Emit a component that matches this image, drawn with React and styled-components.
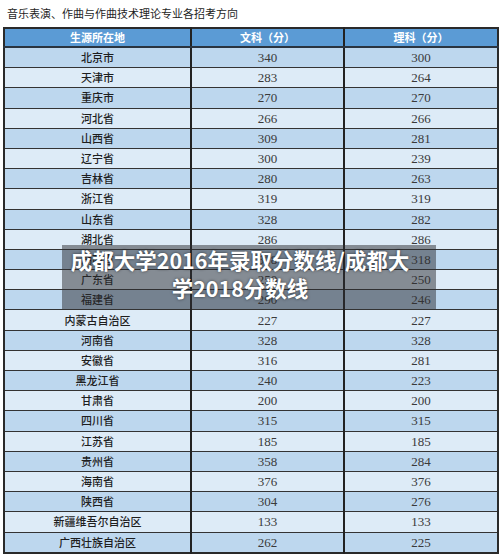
import * as React from 'react';
import styled, { createGlobalStyle } from 'styled-components';

const rows = [
    ['北京市', 340, 300],
    ['天津市', 283, 264],
    ['重庆市', 270, 270],
    ['河北省', 266, 266],
    ['山西省', 309, 281],
    ['辽宁省', 300, 239],
    ['吉林省', 280, 263],
    ['浙江省', 319, 319],
    ['山东省', 328, 282],
    ['湖北省', 286, 286],
    ['湖南省', 318, 318],
    ['广东省', 250, 250],
    ['福建省', 290, 246],
    ['内蒙古自治区', 227, 227],
    ['河南省', 328, 328],
    ['安徽省', 316, 281],
    ['黑龙江省', 240, 223],
    ['甘肃省', 200, 200],
    ['四川省', 315, 315],
    ['江苏省', 185, 185],
    ['贵州省', 358, 284],
    ['海南省', 376, 376],
    ['陕西省', 304, 276],
    ['新疆维吾尔自治区', 133, 133],
    ['广西壮族自治区', 262, 225],
];

const GlobalStyle = createGlobalStyle`
    html, body {
        margin: 0;
        padding: 0;
        background: #fff;
    }
    body {
        font-family: "Noto Sans CJK SC", "Noto Sans", sans-serif;
    }
`;

const Page = styled.div`
    position: relative;
    width: 500px;
    height: 555px;
    overflow: hidden;
    padding: 5px 0 0 3px;
    box-sizing: border-box;
`;

const Title = styled.div`
    padding-left: 4px;
    font-size: 11px;
    line-height: 16px;
    color: #1e1e1e;
    margin-bottom: 6px;
`;

const Table = styled.table`
    width: 494px;
    border-collapse: collapse;
    table-layout: fixed;
    border: 2px solid #2a2a2a;
`;

const HeadCell = styled.th`
    height: 17px;
    padding: 0;
    background: #5b9bd5;
    color: #fff;
    font-size: 11px;
    font-weight: 700;
    line-height: 17px;
    text-align: center;
    border-bottom: 2px solid #2a3440;
    border-left: 2px solid #222;
    &:first-child {
        border-left: none;
    }
`;

const Row = styled.tr`
    background: ${p => (p.$odd ? '#bdd7ee' : '#ddebf7')};
`;

const Cell = styled.td`
    height: 19.2px;
    padding: 0;
    text-align: center;
    border-top: 1px solid #333;
    border-left: 2px solid #222;
    color: ${p => (p.$num ? '#3a3a3a' : '#1e1e1e')};
    font-family: ${p => (p.$num ? '"Liberation Serif", "DejaVu Serif", serif' : '"Noto Sans CJK SC", sans-serif')};
    font-size: ${p => (p.$num ? '13px' : '11px')};
    font-weight: ${p => (p.$num ? 400 : 500)};
    line-height: 19px;
    &:first-child {
        border-left: none;
    }
`;

const Overlay = styled.div`
    position: absolute;
    left: 62px;
    top: 245px;
    width: 374px;
    height: 64px;
    box-sizing: border-box;
    padding: 1px 26px 0 8px;
    background: rgba(45, 45, 50, 0.5);
    color: #fff;
    font-family: "Noto Sans CJK SC", sans-serif;
    font-size: 21.5px;
    font-weight: 700;
    line-height: 28px;
    text-align: center;
    text-shadow: 0 0 3px rgba(0, 0, 0, 0.6);
`;

const App = () => {
    return (
        <React.Fragment>
            <GlobalStyle />
            <Page>
                <Title>音乐表演、作曲与作曲技术理论专业各招考方向</Title>
                <Table>
                    <colgroup>
                        <col style={{ width: '187px' }} />
                        <col style={{ width: '153px' }} />
                        <col style={{ width: '154px' }} />
                    </colgroup>
                    <thead>
                        <tr>
                            <HeadCell>生源所在地</HeadCell>
                            <HeadCell>文科（分）</HeadCell>
                            <HeadCell>理科（分）</HeadCell>
                        </tr>
                    </thead>
                    <tbody>
                        {rows.map((r, i) => (
                            <Row key={r[0]} $odd={i % 2 === 0}>
                                <Cell>{r[0]}</Cell>
                                <Cell $num>{r[1]}</Cell>
                                <Cell $num>{r[2]}</Cell>
                            </Row>
                        ))}
                    </tbody>
                </Table>
                <Overlay>成都大学2016年录取分数线/成都大学2018分数线</Overlay>
            </Page>
        </React.Fragment>
    );
};

export default App;
